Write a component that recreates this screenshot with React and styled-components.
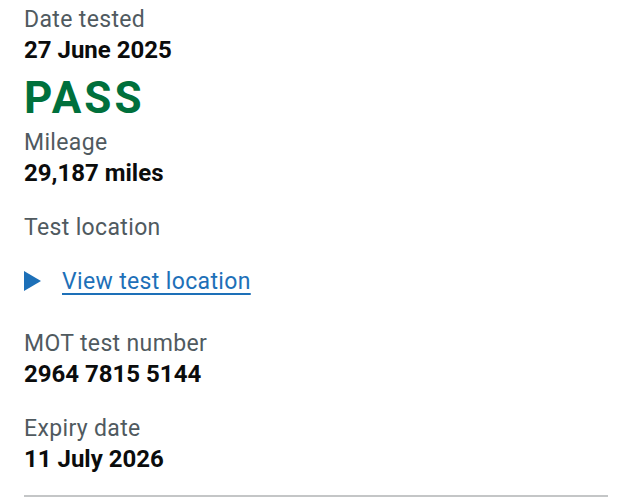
import styled, { createGlobalStyle } from "styled-components";

const GlobalStyle = createGlobalStyle`
  html, body {
    margin: 0;
    padding: 0;
    background: #fff;
  }
  body {
    font-family: Roboto, "Liberation Sans", sans-serif;
    -webkit-font-smoothing: antialiased;
  }
`;

const Page = styled.main`
  width: 632px;
  height: 500px;
  box-sizing: border-box;
  padding: 5px 24px 0;
  overflow: hidden;
`;

const Row = styled.div`
  margin-bottom: ${(p) => p.gap ?? 24}px;
`;

const Label = styled.div`
  font-size: 23px;
  line-height: 30px;
  letter-spacing: 0.35px;
  color: #505a5f;
`;

const Value = styled.div`
  font-size: 24px;
  line-height: 30px;
  font-weight: 700;
  color: #0b0c0c;
`;

const Result = styled.div`
  margin-top: 4px;
  font-size: 44px;
  line-height: 59px;
  font-weight: 700;
  color: #00703c;
  letter-spacing: 3px;
`;

const Details = styled.div`
  margin-top: 24px;
  display: flex;
  align-items: center;
`;

const Arrow = styled.span`
  width: 0;
  height: 0;
  border-style: solid;
  border-width: 10px 0 10px 17px;
  border-color: transparent transparent transparent #1d70b8;
  margin: 0 21px 3px 0;
`;

const Summary = styled.a`
  font-size: 23px;
  line-height: 30px;
  letter-spacing: 0.35px;
  color: #1d70b8;
  text-decoration: underline;
  text-decoration-thickness: 1.5px;
  text-underline-offset: 4px;
  cursor: pointer;
`;

const Divider = styled.hr`
  margin: 0;
  border: 0;
  border-top: 2px solid #c4c6c7;
`;

export default function App() {
  return (
    <>
      <GlobalStyle />
      <Page>
        <Row gap={0}>
          <Label>Date tested</Label>
          <Value>27 June 2025</Value>
          <Result>PASS</Result>
        </Row>
        <Row gap={25}>
          <Label>Mileage</Label>
          <Value>29,187 miles</Value>
        </Row>
        <Row gap={32}>
          <Label>Test location</Label>
          <Details>
            <Arrow />
            <Summary>View test location</Summary>
          </Details>
        </Row>
        <Row gap={25}>
          <Label>MOT test number</Label>
          <Value>2964 7815 5144</Value>
        </Row>
        <Row gap={21}>
          <Label>Expiry date</Label>
          <Value>11 July 2026</Value>
        </Row>
        <Divider />
      </Page>
    </>
  );
}
